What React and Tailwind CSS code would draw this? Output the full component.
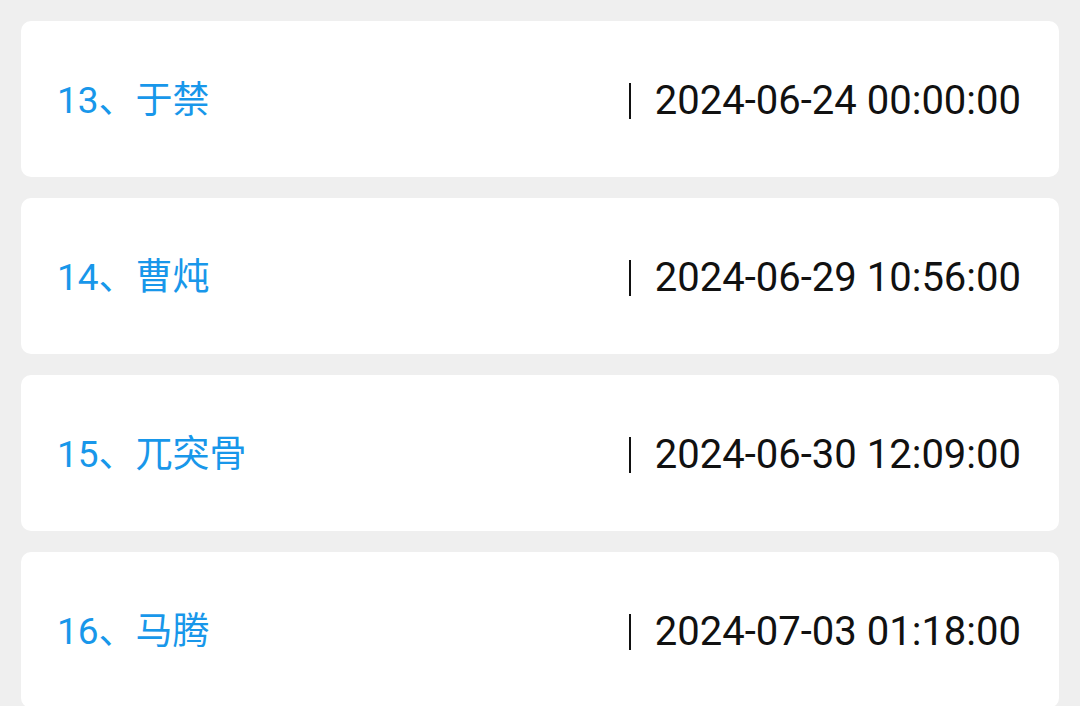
import React from 'react';

const records = [
  { no: 13, name: '于禁', time: '2024-06-24 00:00:00' },
  { no: 14, name: '曹炖', time: '2024-06-29 10:56:00' },
  { no: 15, name: '兀突骨', time: '2024-06-30 12:09:00' },
  { no: 16, name: '马腾', time: '2024-07-03 01:18:00' },
];

const App = () => {
  return (
    <div
      className="min-h-screen bg-[#efefef] px-[21px] pt-[21px] flex flex-col gap-[21px]"
      style={{ fontFamily: 'Roboto, "Noto Sans CJK SC", sans-serif' }}
    >
      {records.map((r) => (
        <div
          key={r.no}
          className="h-[156px] shrink-0 bg-white rounded-[10px] flex items-center justify-between pl-[36px] pr-[38px] pt-[3px]"
        >
          <span className="text-[37px] text-[#1897ea] leading-none">
            {r.no}、{r.name}
          </span>
          <span className="flex items-center text-[40px] text-[#111] leading-none">
            <span className="w-[2px] h-[36px] bg-[#111] mr-[24px]" />
            <span>{r.time}</span>
          </span>
        </div>
      ))}
    </div>
  );
};

export default App;
